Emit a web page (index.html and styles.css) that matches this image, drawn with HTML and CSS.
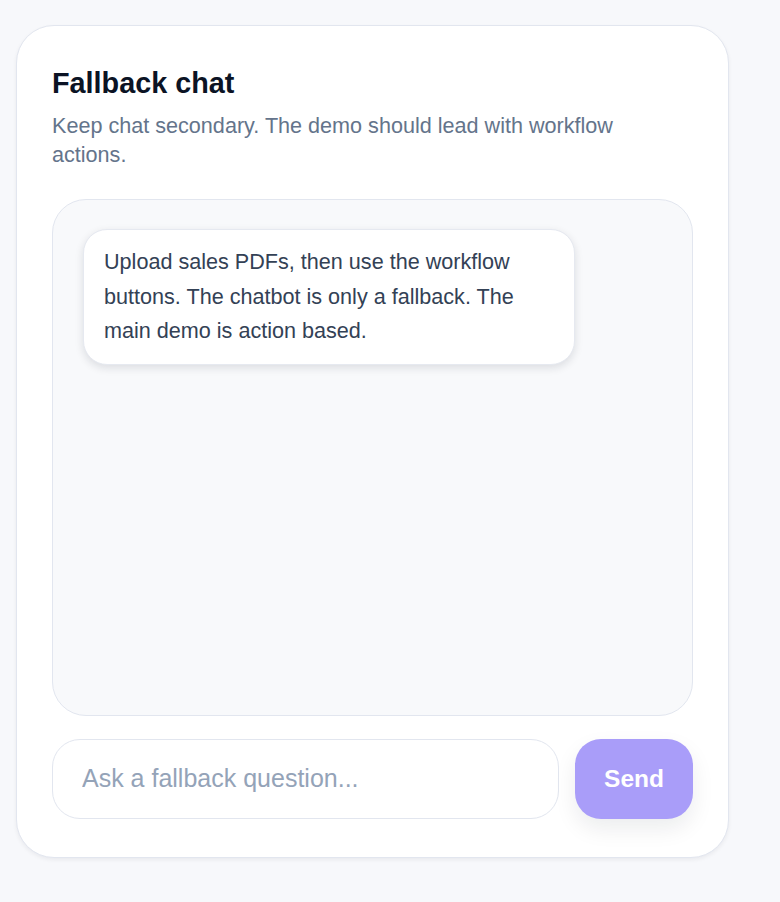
FILE: index.html
```html
<!DOCTYPE html>
<html lang="en">
<head>
    <meta charset="UTF-8">
    <meta name="viewport" content="width=device-width, initial-scale=1.0">
    <title>Fallback chat</title>
    <link rel="stylesheet" href="styles.css">
</head>
<body>
    <section class="card">
        <h2 class="card-title">Fallback chat</h2>
        <p class="card-sub">Keep chat secondary. The demo should lead with workflow actions.</p>

        <div class="chat-log">
            <div class="bubble">Upload sales PDFs, then use the workflow buttons. The chatbot is only a fallback. The main demo is action based.</div>
        </div>

        <form class="chat-form" onsubmit="return false;">
            <input class="chat-input" type="text" placeholder="Ask a fallback question...">
            <button class="send-btn" type="submit">Send</button>
        </form>
    </section>
</body>
</html>
```

FILE: styles.css
```css
* {
    box-sizing: border-box;
}
body {
    margin: 0;
    padding: 25px 16px;
    background-color: #f7f8fb;
    font-family: "Liberation Sans", Arial, sans-serif;
    color: #334155;
}
.card {
    width: 713px;
    background-color: #fff;
    border: 1px solid #e2e6ef;
    border-radius: 38px;
    padding: 40px 35px 38px;
    box-shadow: 0 2px 4px rgba(15, 23, 42, 0.06);
}
.card-title {
    margin: 0;
    font-size: 28.8px;
    line-height: 1.2;
    font-weight: 700;
    color: #0b1324;
}
.card-sub {
    margin: 10px 0 0;
    max-width: 600px;
    font-size: 21.6px;
    line-height: 29.2px;
    color: #64748b;
}
.chat-log {
    margin-top: 30px;
    height: 517px;
    background-color: #f8f9fb;
    border: 1px solid #e2e6ef;
    border-radius: 34px;
    padding: 29px 30px;
}
.bubble {
    width: 492px;
    background-color: #fff;
    border: 1px solid #e6e9f0;
    border-radius: 24px;
    padding: 15px 20px;
    font-size: 21.6px;
    line-height: 34.6px;
    color: #334155;
    box-shadow: 0 3px 8px rgba(15, 23, 42, 0.12);
}
.chat-form {
    display: flex;
    gap: 16px;
    margin-top: 23px;
}
.chat-input {
    flex: 1;
    height: 80px;
    border: 1px solid #e2e6ef;
    border-radius: 28px;
    padding: 0 29px;
    font-family: inherit;
    font-size: 25px;
    color: #334155;
    background-color: #fff;
    outline: none;
}
.chat-input::placeholder {
    color: #94a3b8;
}
.send-btn {
    width: 118px;
    height: 80px;
    border: none;
    border-radius: 26px;
    background-color: #a99df9;
    color: #fff;
    font-family: inherit;
    font-size: 24.5px;
    font-weight: 700;
    cursor: pointer;
    box-shadow: 0 10px 22px rgba(15, 23, 42, 0.08);
}
```
